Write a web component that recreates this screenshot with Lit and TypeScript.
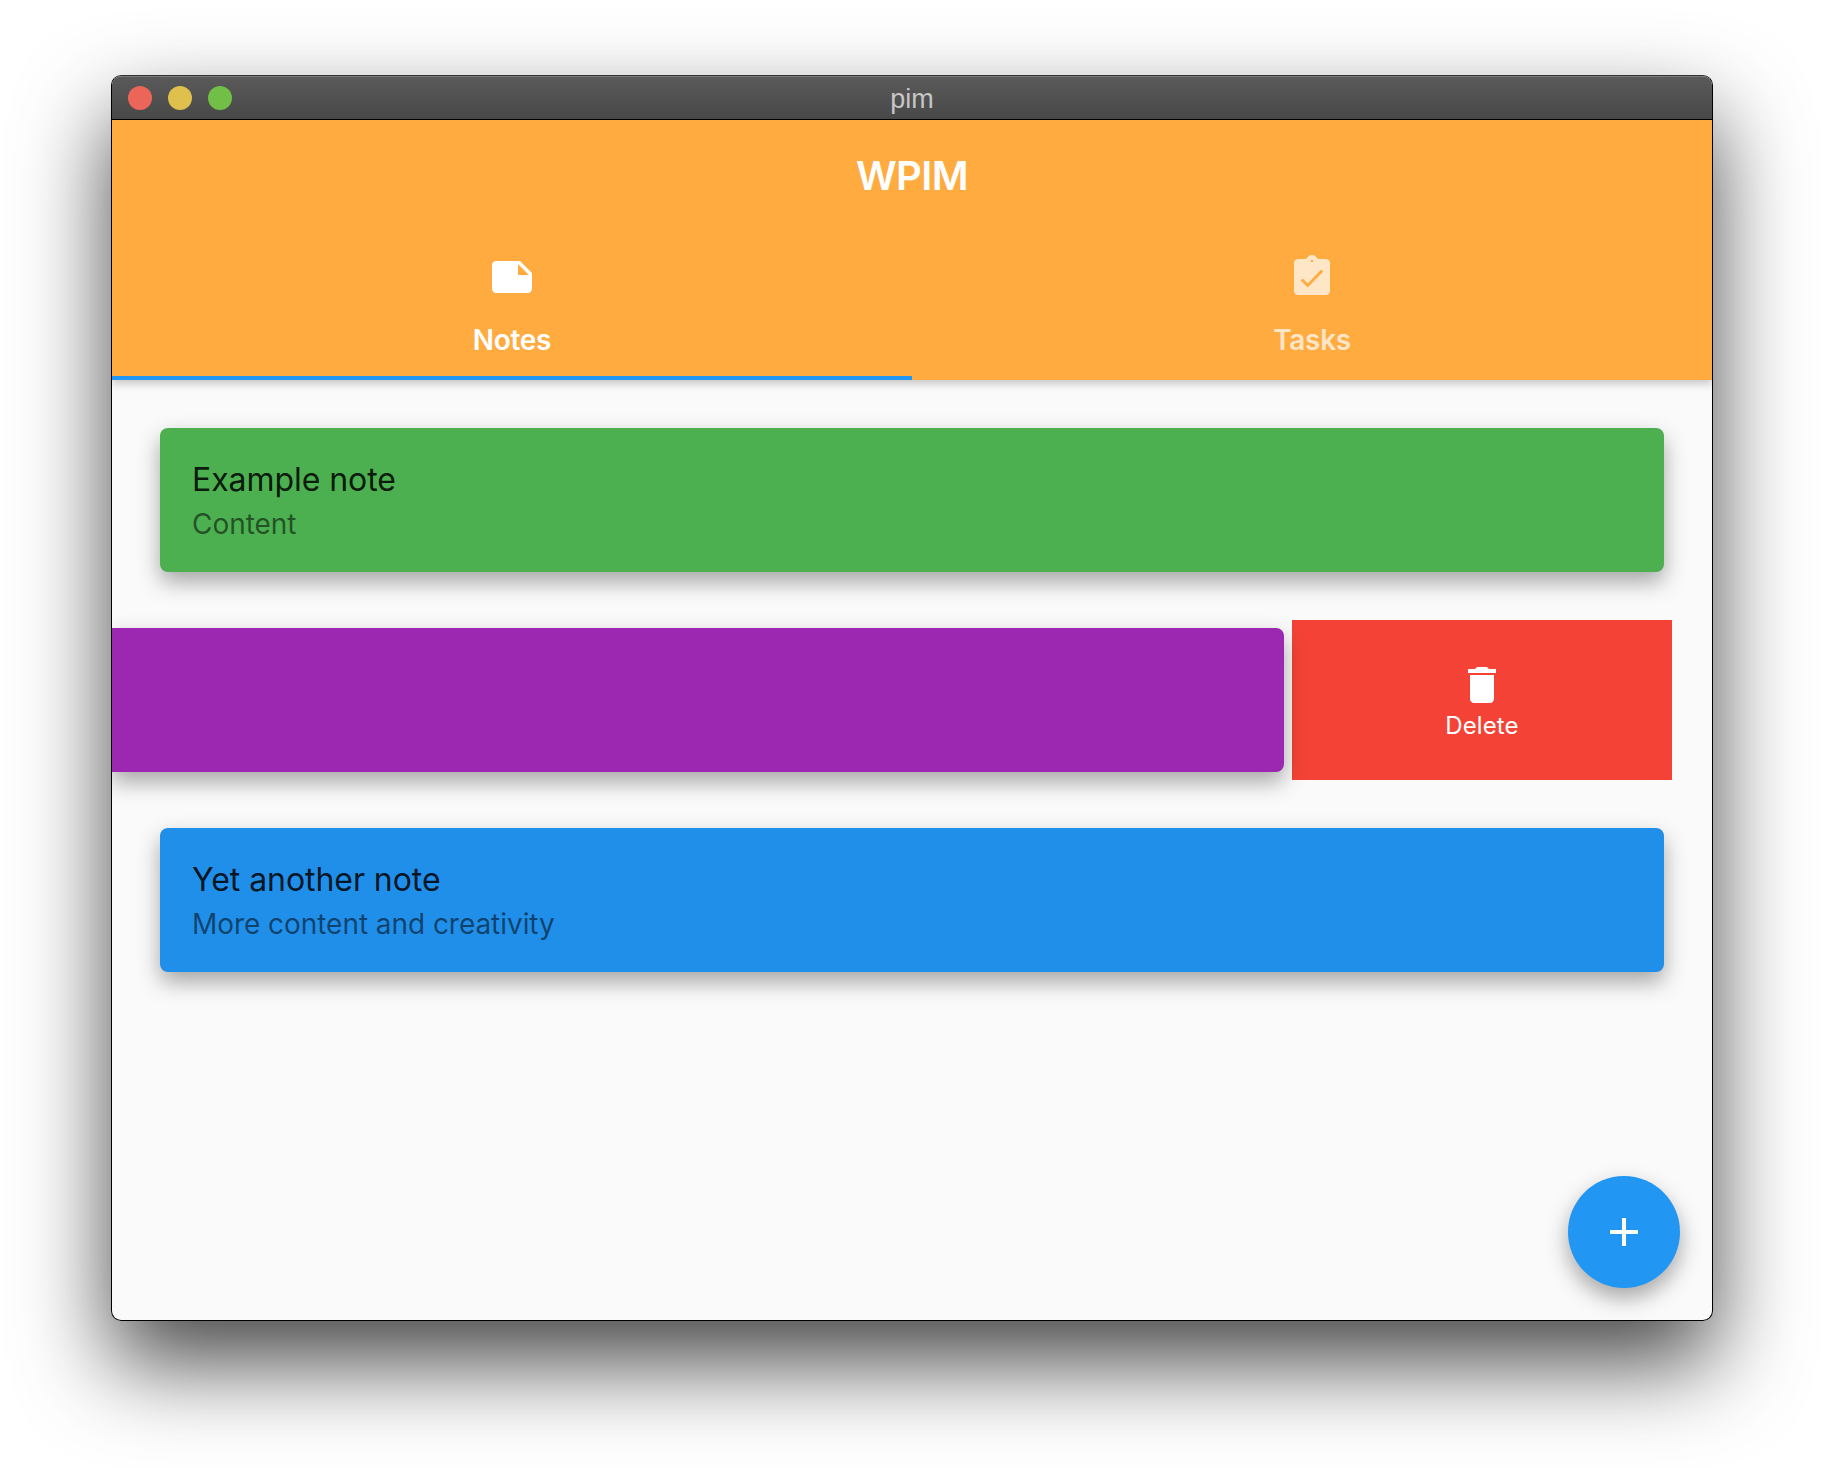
import { LitElement, css, html } from 'lit'
import { customElement } from 'lit/decorators.js'

const notePath = 'M22 10l-6-6H4c-1.1 0-2 .9-2 2v12.01c0 1.1.9 1.99 2 1.99l16-.01c1.1 0 2-.89 2-1.99v-8zm-7-4.5l5.5 5.5H15V5.5z'
// clipboard with a thinner check and a smaller hole than the stock material glyph
const tasksPath = 'M19 3h-4.18C14.4 1.84 13.3 1 12 1c-1.3 0-2.4.84-2.82 2H5c-1.1 0-2 .9-2 2v14c0 1.1.9 2 2 2h14c1.1 0 2-.9 2-2V5c0-1.1-.9-2-2-2zM12 3.4c.35 0 .6.25.6.6s-.25.6-.6.6-.6-.25-.6-.6.25-.6.6-.6zM9.85 17.2L6.35 13.7l1-1 2.5 2.5 6.75-6.9 1 1z'
const deletePath = 'M6 19c0 1.1.9 2 2 2h8c1.1 0 2-.9 2-2V7H6v12zM19 4h-3.5l-1-1h-5l-1 1H5v2h14V4z'
const addPath = 'M19 13h-6v6h-2v-6H5v-2h6V5h2v6h6v2z'

const icon = (d: string) => html`<svg class="icon" viewBox="0 0 24 24"><path d=${d} fill="currentColor" fill-rule="evenodd"></path></svg>`

@customElement('app-root')
export class AppRoot extends LitElement {
  static styles = css`
    :host {
      display: block;
      height: 1468px;
      box-sizing: border-box;
      padding: 75px 111px 0;
      background: #fff;
      font-family: Inter, "Noto Sans", sans-serif;
      overflow: hidden;
    }
    .window {
      position: relative;
      width: 1602px;
      height: 1246px;
      box-sizing: border-box;
      border: 1px solid #000;
      border-top-color: #333;
      border-radius: 10px;
      overflow: hidden;
      background: #fafafa;
    }
    .shadow {
      width: 1602px;
      height: 1246px;
      border-radius: 10px;
      box-shadow: 0 42px 90px rgba(0, 0, 0, 0.72);
      margin-bottom: -1246px;
    }
    .titlebar {
      height: 44px;
      box-sizing: border-box;
      display: flex;
      align-items: center;
      justify-content: center;
      background: linear-gradient(#5a5a5a, #484848);
      border-bottom: 1px solid #000;
      box-shadow: inset 0 1px 0 #7a7a7a;
      position: relative;
    }
    .lights {
      position: absolute;
      left: 16px;
      top: 10px;
      display: flex;
      gap: 16px;
    }
    .light {
      width: 24px;
      height: 24px;
      border-radius: 50%;
    }
    .red { background: #ec6559; }
    .yellow { background: #e0c04c; }
    .green { background: #71bf46; }
    .wintitle {
      font-size: 27px;
      line-height: 32px;
      padding-top: 2px;
      color: #c6c6c6;
      font-family: "Liberation Sans", sans-serif;
    }
    .appbar {
      position: relative;
      z-index: 2;
      background: #ffab40;
      color: #fff;
      box-shadow: 0 4px 8px rgba(0, 0, 0, 0.2);
    }
    .apptitle {
      height: 112px;
      box-sizing: border-box;
      padding-bottom: 2px;
      display: flex;
      align-items: center;
      justify-content: center;
      font-size: 40px;
      font-weight: 600;
      letter-spacing: -0.6px;
    }
    .tabs {
      display: flex;
    }
    .tab {
      flex: 1;
      height: 148px;
      box-sizing: border-box;
      padding-top: 21px;
      display: flex;
      flex-direction: column;
      align-items: center;
      font-size: 28px;
      font-weight: 600;
      letter-spacing: -0.3px;
      opacity: 0.7;
      border-bottom: 4px solid transparent;
    }
    .tab.active {
      opacity: 1;
      border-bottom-color: #2196f3;
    }
    .tab .label {
      margin-top: 20px;
      line-height: 38px;
    }
    .icon {
      width: 48px;
      height: 48px;
      display: block;
    }
    .list {
      padding: 48px 48px 0;
      display: flex;
      flex-direction: column;
      gap: 48px;
    }
    .card {
      height: 144px;
      box-sizing: border-box;
      border-radius: 8px;
      padding: 28px 32px 0;
      box-shadow: 0 10px 22px rgba(0, 0, 0, 0.34);
      position: relative;
      z-index: 1;
    }
    .card .title {
      font-size: 32px;
      line-height: 48px;
      letter-spacing: -0.06px;
      color: rgba(0, 0, 0, 0.87);
    }
    .card .body {
      font-size: 28px;
      line-height: 40px;
      letter-spacing: -0.05px;
      color: rgba(0, 0, 0, 0.54);
    }
    .green-card { background: #4caf50; }
    .purple-card { background: #9c27b0; }
    .blue-card { background: #208fe9; }
    .swiped {
      margin: 0 -8px 0 -48px;
      height: 160px;
      display: flex;
      align-items: center;
      gap: 8px;
    }
    .swiped .card {
      flex: 1;
      border-top-left-radius: 0;
      border-bottom-left-radius: 0;
    }
    .delete {
      width: 380px;
      height: 160px;
      flex: none;
      background: #f44336;
      color: #fff;
      display: flex;
      flex-direction: column;
      align-items: center;
      padding-top: 41px;
      box-sizing: border-box;
      font-size: 24px;
      font-weight: 400;
      letter-spacing: 0.1px;
      line-height: 34px;
    }
    .fab {
      position: absolute;
      right: 32px;
      bottom: 32px;
      width: 112px;
      height: 112px;
      border-radius: 50%;
      background: #2196f3;
      color: #fff;
      display: flex;
      align-items: center;
      justify-content: center;
      box-shadow: 0 10px 22px rgba(0, 0, 0, 0.34);
    }
  `

  render() {
    return html`
      <div class="shadow"></div>
      <div class="window">
        <div class="titlebar">
          <div class="lights">
            <div class="light red"></div>
            <div class="light yellow"></div>
            <div class="light green"></div>
          </div>
          <div class="wintitle">pim</div>
        </div>
        <div class="appbar">
          <div class="apptitle">WPIM</div>
          <div class="tabs">
            <div class="tab active">${icon(notePath)}<div class="label">Notes</div></div>
            <div class="tab">${icon(tasksPath)}<div class="label">Tasks</div></div>
          </div>
        </div>
        <div class="list">
          <div class="card green-card">
            <div class="title">Example note</div>
            <div class="body">Content</div>
          </div>
          <div class="swiped">
            <div class="card purple-card"></div>
            <div class="delete">${icon(deletePath)}<div>Delete</div></div>
          </div>
          <div class="card blue-card">
            <div class="title">Yet another note</div>
            <div class="body">More content and creativity</div>
          </div>
        </div>
        <div class="fab">${icon(addPath)}</div>
      </div>
    `
  }
}
